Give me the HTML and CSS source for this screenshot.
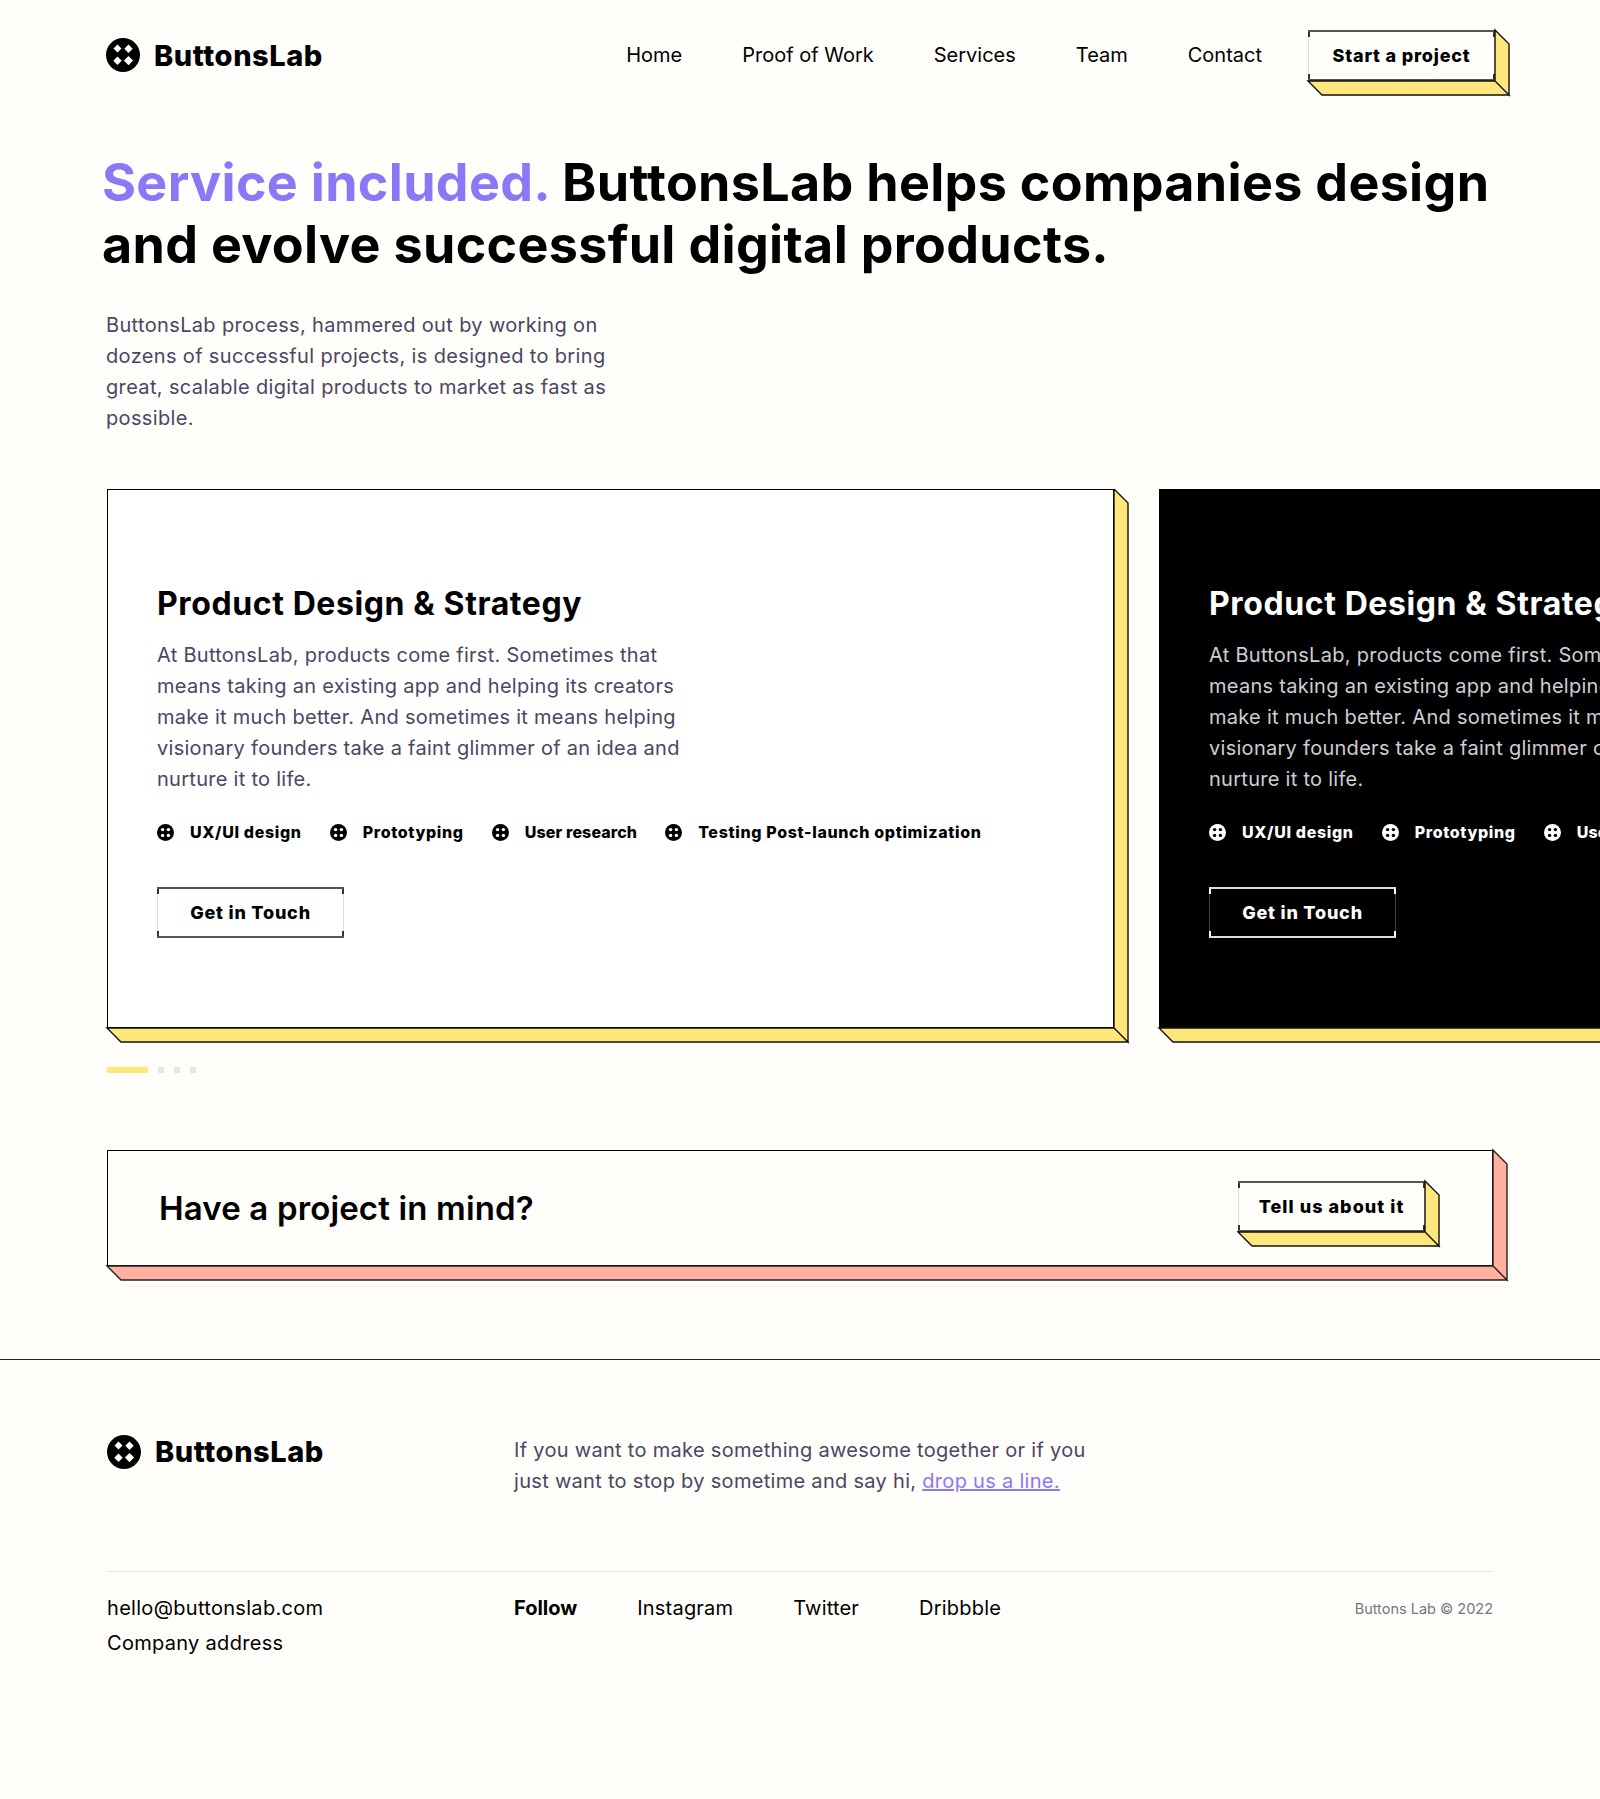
FILE: index.html
```html
<!DOCTYPE html>
<html lang="en">
<head>
<meta charset="utf-8">
<title>ButtonsLab</title>
<link rel="stylesheet" href="styles.css">
</head>
<body>
<header class="topbar">
  <a class="logo" href="#">
    <svg class="logo-mark" viewBox="0 0 34 34" width="34" height="34"><circle cx="17" cy="17" r="17" fill="#000"/><g fill="#fffefa"><path d="M11.5 6.5l4 4-4 4-4-4z"/><path d="M22.5 6.5l4.2 4.2-4.2 4.2-4.2-4.2z"/><path d="M11.5 18.5l4.2 4.2-4.2 4.2-4.2-4.2z"/><path d="M22.5 18l4.6 4.6-4.6 4.6-4.6-4.6z"/></g></svg>
    <span>ButtonsLab</span>
  </a>
  <nav class="nav">
    <a href="#">Home</a><a href="#">Proof of Work</a><a href="#">Services</a><a href="#">Team</a><a href="#">Contact</a>
  </nav>
  <a class="btn btn-3d" href="#">Start a project
    <svg class="depth" width="202" height="66"><path class="face-y" d="M187 0l14 14v51l-14-14zM0 51h187l14 14H14z"/></svg>
  </a>
</header>

<section class="hero">
  <h1><em>Service included.</em> ButtonsLab helps companies design and evolve successful digital products.</h1>
  <p>ButtonsLab process, hammered out by working on dozens of successful projects, is designed to bring great, scalable digital products to market as fast as possible.</p>
</section>

<section class="carousel">
  <article class="card">
    <svg class="depth" width="1022" height="554"><path class="face-y" d="M1007 0l14 14v539l-14-14zM0 539h1007l14 14H14z"/></svg>
    <h2>Product Design &amp; Strategy</h2>
    <p>At ButtonsLab, products come first. Sometimes that means taking an existing app and helping its creators make it much better. And sometimes it means helping visionary founders take a faint glimmer of an idea and nurture it to life.</p>
    <ul class="tags">
      <li><svg viewBox="0 0 17 17" width="17" height="17"><circle cx="8.5" cy="8.5" r="8.5" fill="currentColor"/><g class="pip"><circle cx="5.6" cy="5.6" r="1.7"/><circle cx="11.4" cy="5.6" r="1.7"/><circle cx="5.6" cy="11.4" r="1.7"/><circle cx="11.4" cy="11.4" r="1.7"/></g></svg>UX/UI design</li>
      <li><svg viewBox="0 0 17 17" width="17" height="17"><circle cx="8.5" cy="8.5" r="8.5" fill="currentColor"/><g class="pip"><circle cx="5.6" cy="5.6" r="1.7"/><circle cx="11.4" cy="5.6" r="1.7"/><circle cx="5.6" cy="11.4" r="1.7"/><circle cx="11.4" cy="11.4" r="1.7"/></g></svg>Prototyping</li>
      <li class="tag-tight"><svg viewBox="0 0 17 17" width="17" height="17"><circle cx="8.5" cy="8.5" r="8.5" fill="currentColor"/><g class="pip"><circle cx="5.6" cy="5.6" r="1.7"/><circle cx="11.4" cy="5.6" r="1.7"/><circle cx="5.6" cy="11.4" r="1.7"/><circle cx="11.4" cy="11.4" r="1.7"/></g></svg>User research</li>
      <li><svg viewBox="0 0 17 17" width="17" height="17"><circle cx="8.5" cy="8.5" r="8.5" fill="currentColor"/><g class="pip"><circle cx="5.6" cy="5.6" r="1.7"/><circle cx="11.4" cy="5.6" r="1.7"/><circle cx="5.6" cy="11.4" r="1.7"/><circle cx="11.4" cy="11.4" r="1.7"/></g></svg>Testing Post-launch optimization</li>
    </ul>
    <a class="btn btn-flat" href="#">Get in Touch</a>
  </article>
  <article class="card card-dark">
    <svg class="depth" width="1022" height="554"><path class="face-y" d="M1007 0l14 14v539l-14-14zM0 539h1007l14 14H14z"/></svg>
    <h2>Product Design &amp; Strategy</h2>
    <p>At ButtonsLab, products come first. Sometimes that means taking an existing app and helping its creators make it much better. And sometimes it means helping visionary founders take a faint glimmer of an idea and nurture it to life.</p>
    <ul class="tags">
      <li><svg viewBox="0 0 17 17" width="17" height="17"><circle cx="8.5" cy="8.5" r="8.5" fill="currentColor"/><g class="pip"><circle cx="5.6" cy="5.6" r="1.7"/><circle cx="11.4" cy="5.6" r="1.7"/><circle cx="5.6" cy="11.4" r="1.7"/><circle cx="11.4" cy="11.4" r="1.7"/></g></svg>UX/UI design</li>
      <li><svg viewBox="0 0 17 17" width="17" height="17"><circle cx="8.5" cy="8.5" r="8.5" fill="currentColor"/><g class="pip"><circle cx="5.6" cy="5.6" r="1.7"/><circle cx="11.4" cy="5.6" r="1.7"/><circle cx="5.6" cy="11.4" r="1.7"/><circle cx="11.4" cy="11.4" r="1.7"/></g></svg>Prototyping</li>
      <li class="tag-tight"><svg viewBox="0 0 17 17" width="17" height="17"><circle cx="8.5" cy="8.5" r="8.5" fill="currentColor"/><g class="pip"><circle cx="5.6" cy="5.6" r="1.7"/><circle cx="11.4" cy="5.6" r="1.7"/><circle cx="5.6" cy="11.4" r="1.7"/><circle cx="11.4" cy="11.4" r="1.7"/></g></svg>User research</li>
      <li><svg viewBox="0 0 17 17" width="17" height="17"><circle cx="8.5" cy="8.5" r="8.5" fill="currentColor"/><g class="pip"><circle cx="5.6" cy="5.6" r="1.7"/><circle cx="11.4" cy="5.6" r="1.7"/><circle cx="5.6" cy="11.4" r="1.7"/><circle cx="11.4" cy="11.4" r="1.7"/></g></svg>Testing Post-launch optimization</li>
    </ul>
    <a class="btn btn-flat" href="#">Get in Touch</a>
  </article>
</section>

<div class="pager"><span class="dash"></span><span></span><span></span><span></span></div>

<section class="cta">
  <svg class="depth" width="1401" height="131"><path class="face-s" d="M1386 0l14 14v116l-14-14zM0 116h1386l14 14H14z"/></svg>
  <h3>Have a project in mind?</h3>
  <a class="btn btn-3d" href="#">Tell us about it
    <svg class="depth" width="202" height="66"><path class="face-y" d="M187 0l14 14v51l-14-14zM0 51h187l14 14H14z"/></svg>
  </a>
</section>

<footer class="footer">
  <div class="footer-top">
    <a class="logo" href="#">
      <svg class="logo-mark" viewBox="0 0 34 34" width="34" height="34"><circle cx="17" cy="17" r="17" fill="#000"/><g fill="#fffefa"><path d="M11.5 6.5l4 4-4 4-4-4z"/><path d="M22.5 6.5l4.2 4.2-4.2 4.2-4.2-4.2z"/><path d="M11.5 18.5l4.2 4.2-4.2 4.2-4.2-4.2z"/><path d="M22.5 18l4.6 4.6-4.6 4.6-4.6-4.6z"/></g></svg>
      <span>ButtonsLab</span>
    </a>
    <p>If you want to make something awesome together or if you just want to stop by sometime and say hi, <a href="#">drop us a line.</a></p>
  </div>
  <div class="footer-bottom">
    <address>hello@buttonslab.com<br>Company address</address>
    <div class="social"><strong>Follow</strong><a href="#">Instagram</a><a href="#">Twitter</a><a href="#">Dribbble</a></div>
    <small>Buttons Lab © 2022</small>
  </div>
</footer>
</body>
</html>
```
FILE: styles.css
```css
* { box-sizing: border-box; }
html, body { margin: 0; padding: 0; }
body {
  min-height: 1799px;
  overflow-x: hidden;
  background: #fffefa;
  color: #000;
  font-family: "Inter", "Liberation Sans", sans-serif;
}
a { color: inherit; text-decoration: none; }

.topbar {
  display: flex;
  align-items: center;
  height: 110px;
  padding: 0 105px 0 106px;
}
.logo {
  display: flex;
  align-items: center;
  gap: 14px;
  font-size: 29px;
  font-weight: 800;
  letter-spacing: 0.55px;
}
.logo-mark { flex: none; }
.nav {
  display: flex;
  gap: 60px;
  margin-left: auto;
  font-size: 20px;
  line-height: 24px;
}
.btn {
  display: flex;
  align-items: center;
  justify-content: center;
  width: 187px;
  height: 51px;
  font-size: 18px;
  font-weight: 800;
  letter-spacing: 0.8px;
  border-top: 2px solid #555;
  border-bottom: 2px solid #555;
  background:
    linear-gradient(#333, #333) 0 0 / 2px 5px no-repeat,
    linear-gradient(#333, #333) 100% 0 / 2px 5px no-repeat,
    linear-gradient(#333, #333) 0 100% / 2px 5px no-repeat,
    linear-gradient(#333, #333) 100% 100% / 2px 5px no-repeat,
    linear-gradient(#ddd, #ddd) 0 0 / 1px 100% no-repeat,
    linear-gradient(#ddd, #ddd) 100% 0 / 1px 100% no-repeat;
}
.btn-3d {
  position: relative;
  margin-left: 46px;
  background-color: #fffefa;
}
.depth {
  position: absolute;
  top: -2px;
  left: 0;
  overflow: visible;
  pointer-events: none;
}
.face-y { fill: #ffe77c; stroke: #111; stroke-width: 1.4; stroke-linejoin: miter; }
.face-s { fill: #ffb09e; stroke: #222; stroke-width: 1.4; stroke-linejoin: miter; }

.hero { padding: 42px 100px 0 102px; }
.hero h1 {
  margin: 0;
  font-size: 52px;
  line-height: 62px;
  font-weight: 700;
  letter-spacing: 0.32px;
}
.hero h1 em { font-style: normal; color: #8b78f6; }
.hero p {
  width: 520px;
  margin: 34px 0 0 4px;
  font-size: 20px;
  line-height: 31px;
  letter-spacing: 0.35px;
  color: #4b4663;
}

.carousel {
  display: flex;
  gap: 45px;
  margin-top: 55px;
  padding: 0 0 16px 107px;
  overflow: hidden;
}
.card {
  position: relative;
  flex: 0 0 1007px;
  height: 539px;
  padding: 94px 49px 0;
  background: #fff;
  border: 1px solid #000;
}
.card .depth { top: -1px; left: -1px; }
.card h2 {
  margin: 0;
  font-size: 32px;
  line-height: 40px;
  font-weight: 700;
  letter-spacing: 0.6px;
}
.card p {
  width: 545px;
  margin: 16px 0 0;
  font-size: 20px;
  line-height: 31px;
  letter-spacing: 0.28px;
  color: #4b4663;
}
.tags {
  display: flex;
  gap: 28px;
  margin: 27px 0 0;
  padding: 0;
  list-style: none;
  font-size: 16px;
  font-weight: 800;
  line-height: 20px;
  letter-spacing: 0.65px;
  white-space: nowrap;
}
.tags li { display: flex; align-items: center; gap: 16px; }
.tags .tag-tight { letter-spacing: 0.12px; }
.pip { fill: #fff; }
.btn-flat { margin-top: 45px; }
.card-dark { background: #000; color: #fff; border-color: #000; }
.card-dark p { color: #cfcdd6; }
.card-dark .pip { fill: #000; }
.card-dark .btn-flat {
  border-top-color: #ddd;
  border-bottom-color: #ddd;
  background:
    linear-gradient(#fff, #fff) 0 0 / 2px 5px no-repeat,
    linear-gradient(#fff, #fff) 100% 0 / 2px 5px no-repeat,
    linear-gradient(#fff, #fff) 0 100% / 2px 5px no-repeat,
    linear-gradient(#fff, #fff) 100% 100% / 2px 5px no-repeat,
    linear-gradient(#444, #444) 0 0 / 1px 100% no-repeat,
    linear-gradient(#444, #444) 100% 0 / 1px 100% no-repeat;
}

.pager {
  display: flex;
  align-items: center;
  gap: 10px;
  height: 5px;
  margin: 23px 0 0 107px;
}
.pager span { width: 6px; height: 6px; background: #e6e6e4; }
.pager .dash { width: 41px; height: 6px; background: #ffe77c; }

.cta {
  position: relative;
  display: flex;
  align-items: center;
  justify-content: space-between;
  width: 1386px;
  height: 116px;
  margin: 78px 0 0 107px;
  padding: 0 67px 0 51px;
  border: 1px solid #000;
}
.cta > .depth { top: -1px; left: -1px; }
.cta h3 {
  margin: 0;
  font-size: 33px;
  font-weight: 600;
  line-height: 40px;
  letter-spacing: 0.15px;
}
.cta .btn-3d { margin: -4px 0 0; letter-spacing: 1.05px; }

.footer {
  margin-top: 93px;
  border-top: 1px solid #222;
  padding: 0 107px;
}
.footer-top {
  display: flex;
  align-items: flex-start;
  height: 212px;
  border-bottom: 1px solid #e8e8e6;
  padding-top: 75px;
}
.footer-top .logo { width: 407px; margin-top: -1px; }
.footer-top p {
  width: 590px;
  margin: 0;
  font-size: 20px;
  line-height: 31px;
  letter-spacing: 0.3px;
  color: #4b4663;
}
.footer-top p a { color: #8b78f6; text-decoration: underline; }
.footer-bottom {
  display: flex;
  align-items: flex-start;
  padding-top: 19px;
  font-size: 20px;
  line-height: 35px;
}
.footer-bottom address { width: 407px; font-style: normal; letter-spacing: 0.3px; }
.social { display: flex; gap: 60px; letter-spacing: 0.2px; }
.social strong { font-weight: 700; letter-spacing: 0; }
.footer-bottom small {
  margin-left: auto;
  font-size: 14.5px;
  color: #77757f;
}
```
